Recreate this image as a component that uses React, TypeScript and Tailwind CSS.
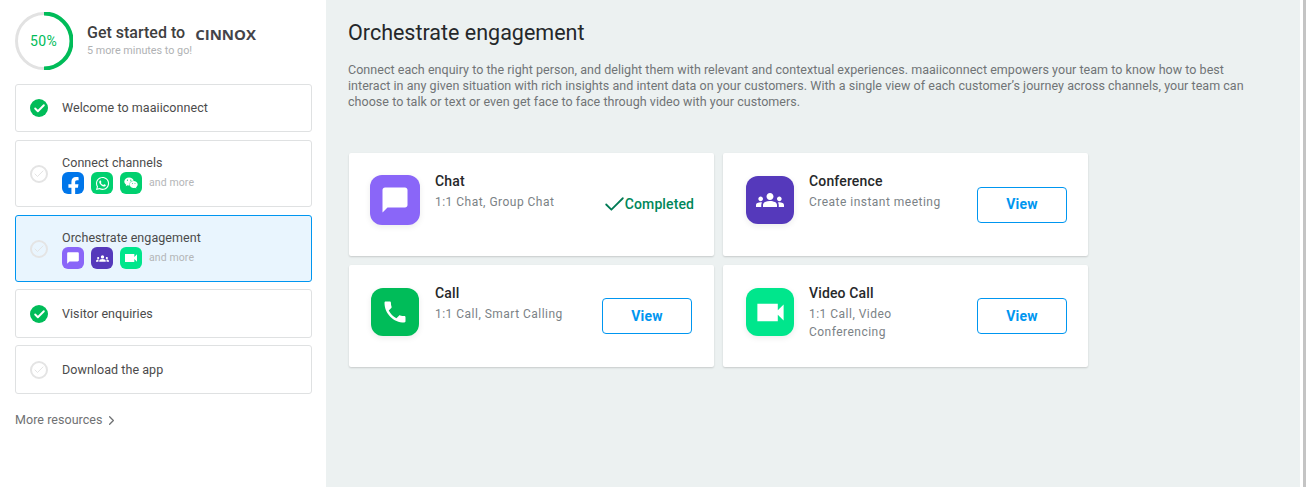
import type { ReactNode } from "react";
import { Check, ChevronRight } from "lucide-react";
import { FaFacebookF, FaWhatsapp, FaWeixin } from "react-icons/fa";

function ChatGlyph({ className }: { className: string }) {
  return (
    <svg viewBox="0 0 24 24" className={className} fill="currentColor">
      <path d="M20 2H4c-1.1 0-2 .9-2 2v18l4-4h14c1.1 0 2-.9 2-2V4c0-1.1-.9-2-2-2z" />
    </svg>
  );
}

function GroupGlyph({ className }: { className: string }) {
  return (
    <svg viewBox="0 0 24 24" className={className} fill="currentColor">
      <path d="M12 12.75c1.63 0 3.07.39 4.24.9 1.08.48 1.76 1.56 1.76 2.73V18H6v-1.61c0-1.18.68-2.26 1.76-2.73 1.17-.52 2.61-.91 4.24-.91zM4 13c1.1 0 2-.9 2-2s-.9-2-2-2-2 .9-2 2 .9 2 2 2zm1.13 1.1C4.76 14.04 4.39 14 4 14c-.99 0-1.93.21-2.78.58C.48 14.9 0 15.62 0 16.43V18h4.5v-1.61c0-.83.23-1.61.63-2.29zM20 13c1.1 0 2-.9 2-2s-.9-2-2-2-2 .9-2 2 .9 2 2 2zm4 3.43c0-.81-.48-1.53-1.22-1.85-.85-.37-1.79-.58-2.78-.58-.39 0-.76.04-1.13.1.4.68.63 1.46.63 2.29V18H24v-1.57zM12 6c1.66 0 3 1.34 3 3s-1.34 3-3 3-3-1.34-3-3 1.34-3 3-3z" />
    </svg>
  );
}

function VideoGlyph({ className }: { className: string }) {
  return (
    <svg viewBox="0 0 24 24" className={className} fill="currentColor">
      <path d="M17 10.5V6H3v12h14v-4.5l4 4v-11z" />
    </svg>
  );
}

function PhoneGlyph({ className }: { className: string }) {
  return (
    <svg viewBox="0 0 24 24" className={className} fill="currentColor">
      <path d="M6.62 10.79c1.44 2.83 3.76 5.14 6.59 6.59l2.2-2.2c.27-.27.67-.36 1.02-.24 1.12.37 2.33.57 3.57.57.55 0 1 .45 1 1V20c0 .55-.45 1-1 1-9.39 0-17-7.61-17-17 0-.55.45-1 1-1h3.5c.55 0 1 .45 1 1 0 1.25.2 2.45.57 3.57.11.35.03.74-.25 1.02l-2.2 2.2z" />
    </svg>
  );
}

function StepCheck({ done }: { done: boolean }) {
  if (done) {
    return (
      <span className="flex h-[18px] w-[18px] shrink-0 items-center justify-center rounded-full bg-[#00bc59] text-white">
        <Check size={13} strokeWidth={3.5} />
      </span>
    );
  }
  return (
    <span className="flex h-[18px] w-[18px] shrink-0 items-center justify-center rounded-full border-2 border-[#e4e4e4] text-[#e4e4e4]">
      <Check size={12} strokeWidth={2} />
    </span>
  );
}

function MiniIcon({ className, children }: { className: string; children: ReactNode }) {
  return (
    <span className={`flex h-[22px] w-[22px] items-center justify-center overflow-hidden rounded-[6px] text-white ${className}`}>
      {children}
    </span>
  );
}

function SimpleStep({ label, done, className = "h-12" }: { label: string; done: boolean; className?: string }) {
  return (
    <div className={`flex items-center gap-[14px] rounded-[3px] border border-[#dfe1e2] bg-white pl-[14px] ${className}`}>
      <StepCheck done={done} />
      <span className="text-[12.5px] tracking-[0.06px] text-[#4b4b4b]">{label}</span>
    </div>
  );
}

function IconStep({ label, active, icons }: { label: string; active?: boolean; icons: ReactNode }) {
  const box = active ? "-mb-[1px] border-[#0096f0] bg-[#e9f5fe]" : "border-[#dfe1e2] bg-white";
  return (
    <div className={`flex h-[67px] items-center gap-[14px] rounded-[3px] border pl-[14px] ${box}`}>
      <StepCheck done={false} />
      <div className="flex flex-col pt-[2px]">
        <span className="text-[12.5px] leading-[15px] tracking-[0.06px] text-[#4b4b4b]">{label}</span>
        <div className="mt-[2px] flex items-center gap-[7px]">
          {icons}
          <span className="text-[10.5px] tracking-[0.1px] text-[#b4b6b8]">and more</span>
        </div>
      </div>
    </div>
  );
}

function Sidebar() {
  return (
    <aside className="flex w-[326px] shrink-0 flex-col bg-white pt-[12px] pr-[14px] pl-[15px]">
      <div className="flex items-center gap-[14px]">
        <div className="relative flex h-[58px] w-[58px] items-center justify-center">
          <svg viewBox="0 0 58 58" className="absolute inset-0 h-full w-full">
            <circle cx="29" cy="29" r="27.5" fill="none" stroke="#e2e2e2" strokeWidth="3" />
            <path d="M29 1.5a27.5 27.5 0 0 1 0 55" fill="none" stroke="#00bc59" strokeWidth="4" />
          </svg>
          <span className="-ml-[1px] text-[14px] tracking-[0.3px] text-[#00bc59]">50%</span>
        </div>
        <div className="flex flex-col pb-[4px]">
          <div className="flex items-baseline gap-[10px]">
            <span className="text-[16px] leading-[20px] font-medium text-[#3f3f3f]">Get started to</span>
            <span className="translate-y-[2px] font-['Open_Sans',sans-serif] text-[15px] font-bold text-[#44444a]">CINNOX</span>
          </div>
          <span className="mt-[1px] text-[10.8px] leading-[13px] text-[#b0b2b4]">5 more minutes to go!</span>
        </div>
      </div>
      <div className="mt-[14px] flex flex-col gap-2">
        <SimpleStep label="Welcome to maaiiconnect" done />
        <IconStep
          label="Connect channels"
          icons={
            <>
              <MiniIcon className="items-end bg-[#0076ea]">
                <FaFacebookF size={19} className="translate-y-[2px]" />
              </MiniIcon>
              <MiniIcon className="bg-[#00d06f]">
                <FaWhatsapp size={15} />
              </MiniIcon>
              <MiniIcon className="bg-[#00d06f]">
                <FaWeixin size={14} />
              </MiniIcon>
            </>
          }
        />
        <IconStep
          label="Orchestrate engagement"
          active
          icons={
            <>
              <MiniIcon className="bg-[#8a66f8]">
                <ChatGlyph className="h-[14px] w-[14px]" />
              </MiniIcon>
              <MiniIcon className="bg-[#5539bb]">
                <GroupGlyph className="h-[13px] w-[13px]" />
              </MiniIcon>
              <MiniIcon className="bg-[#00e68c]">
                <VideoGlyph className="h-[16px] w-[16px]" />
              </MiniIcon>
            </>
          }
        />
        <SimpleStep label="Visitor enquiries" done className="-mb-[1px] h-[49px] pt-[1px]" />
        <SimpleStep label="Download the app" done={false} className="h-[49px] pt-[1px]" />
      </div>
      <div className="mt-[17px] flex items-center gap-[1px] text-[12.5px] tracking-[0.05px] text-[#6f7173]">
        More resources
        <ChevronRight size={15} strokeWidth={2} />
      </div>
    </aside>
  );
}

type CardProps = {
  title: string;
  desc: string;
  color: string;
  icon: ReactNode;
  iconSize?: string;
  right?: boolean;
  completed?: boolean;
};

function Card({ title, desc, color, icon, iconSize = "h-[48px] w-[48px]", right, completed }: CardProps) {
  const pad = right ? "pr-[21px] pl-[23px]" : "pr-[22px] pl-[22px]";
  return (
    <div className={`flex rounded-[2px] bg-white pt-[23px] shadow-[0_1px_2px_rgba(0,0,0,0.16)] ${pad}`}>
      <span className={`flex shrink-0 items-center justify-center rounded-[12px] text-white shadow-[0_2px_6px_rgba(0,0,0,0.08)] ${color} ${iconSize}`}>
        {icon}
      </span>
      <div className={`-mt-[4px] w-[146px] shrink-0 ${right ? "ml-[15px]" : "ml-[16px]"}`}>
        <div className="text-[14px] leading-[18px] font-medium tracking-[0.15px] text-[#26282a]">{title}</div>
        <div className="mt-[3px] text-[12px] leading-[18px] tracking-[0.48px] text-[#7b8286]">{desc}</div>
      </div>
      <div className="-mt-[23px] flex flex-1 items-center justify-end">
        {completed ? (
          <span className="-mr-[2px] flex items-center text-[14px] font-medium tracking-[0.1px] text-[#00875a]">
            <Check size={25} strokeWidth={1.7} className="-mr-[2px] text-[#007a55]" />
            Completed
          </span>
        ) : (
          <button className="flex h-[36px] w-[90px] items-center justify-center rounded-[4px] border border-[#0096f0] bg-white text-[14px] font-bold tracking-[0.2px] text-[#0096f0]">
            View
          </button>
        )}
      </div>
    </div>
  );
}

export default function App() {
  return (
    <div className="flex h-[487px] w-[1306px] overflow-hidden bg-white font-['Roboto',sans-serif]">
      <Sidebar />
      <main className="w-[974px] shrink-0 bg-[#ecf1f1] pt-[20px] pl-[22px]">
        <h1 className="text-[21.5px] leading-[26px] text-[#25282a]">Orchestrate engagement</h1>
        <p className="mt-[16px] w-[910px] text-[12.5px] leading-4 tracking-[0.04px] text-[#707476]">
          Connect each enquiry to the right person, and delight them with relevant and contextual experiences. maaiiconnect empowers your team to know how to best interact in any given situation with rich insights and intent data on your customers. With a single view of each customer’s journey across channels, your team can choose to talk or text or even get face to face through video with your customers.
        </p>
        <div className="mt-[43px] ml-[1px] grid w-[739px] grid-cols-2 grid-rows-[103px_102px] gap-[9px]">
          <Card title="Chat" desc="1:1 Chat, Group Chat" color="bg-[#8a66f8]" iconSize="-m-[1px] h-[50px] w-[50px]" icon={<ChatGlyph className="h-[30px] w-[30px]" />} completed />
          <Card title="Conference" desc="Create instant meeting" color="bg-[#5539bb]" icon={<GroupGlyph className="h-[28px] w-[28px]" />} right />
          <Card title="Call" desc="1:1 Call, Smart Calling" color="bg-[#00bc59]" icon={<PhoneGlyph className="h-[28px] w-[28px]" />} />
          <Card title="Video Call" desc="1:1 Call, Video Conferencing" color="bg-[#00e68c]" icon={<VideoGlyph className="h-[35px] w-[35px]" />} right />
        </div>
      </main>
      <div className="w-[3px] shrink-0 bg-white" />
      <div className="w-[3px] shrink-0 bg-[#c4c4c4]" />
    </div>
  );
}
